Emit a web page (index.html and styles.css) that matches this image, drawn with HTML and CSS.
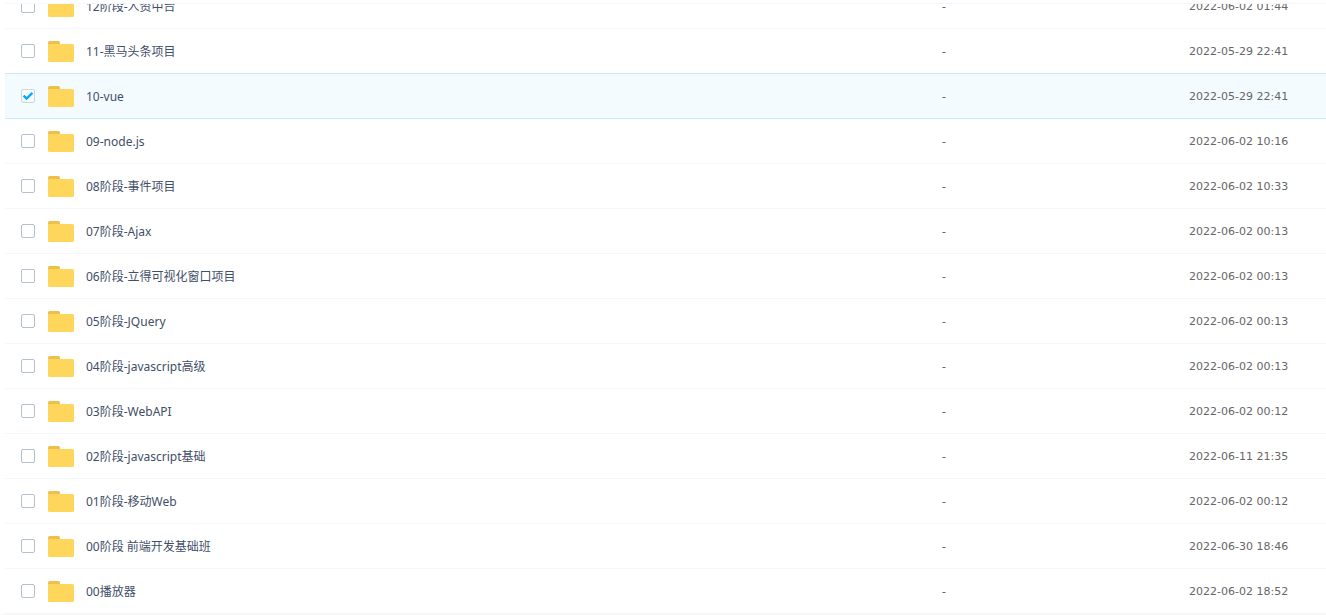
FILE: index.html
```html
<!DOCTYPE html>
<html lang="zh-CN">
<head>
    <meta charset="UTF-8">
    <meta name="viewport" content="width=device-width, initial-scale=1.0">
    <title>全部文件</title>
    <link rel="stylesheet" href="styles.css">
</head>
<body>
    <!-- Folder icon shared by all rows -->
    <svg class="sprite" aria-hidden="true">
        <symbol id="folder" viewBox="0 0 26 21">
            <path fill="#edc04b" d="M0 5V1.5Q0 0 1.5 0H10.5Q12 0 12 1.5V5Z"/>
            <path fill="#ffd65c" d="M0 3H24.5Q26 3 26 4.5V19.5Q26 21 24.5 21H1.5Q0 21 0 19.5Z"/>
        </symbol>
    </svg>

    <main class="file-list">
        <table class="file-table">
            <colgroup>
                <col class="col-check">
                <col class="col-name">
                <col class="col-size">
                <col class="col-date">
            </colgroup>
            <tbody>
                <tr>
                    <td><input type="checkbox" class="check" aria-labelledby="f12"></td>
                    <td><div class="name"><svg class="folder"><use href="#folder"/></svg><a href="#" id="f12">12阶段-人资中台</a></div></td>
                    <td class="size">-</td>
                    <td class="date">2022-06-02 01:44</td>
                </tr>
                <tr class="before-selected">
                    <td><input type="checkbox" class="check" aria-labelledby="f11"></td>
                    <td><div class="name"><svg class="folder"><use href="#folder"/></svg><a href="#" id="f11">11-黑马头条项目</a></div></td>
                    <td class="size">-</td>
                    <td class="date">2022-05-29 22:41</td>
                </tr>
                <tr class="selected">
                    <td><input type="checkbox" class="check" aria-labelledby="f10" checked></td>
                    <td><div class="name"><svg class="folder"><use href="#folder"/></svg><a href="#" id="f10">10-vue</a></div></td>
                    <td class="size">-</td>
                    <td class="date">2022-05-29 22:41</td>
                </tr>
                <tr>
                    <td><input type="checkbox" class="check" aria-labelledby="f09"></td>
                    <td><div class="name"><svg class="folder"><use href="#folder"/></svg><a href="#" id="f09">09-node.js</a></div></td>
                    <td class="size">-</td>
                    <td class="date">2022-06-02 10:16</td>
                </tr>
                <tr>
                    <td><input type="checkbox" class="check" aria-labelledby="f08"></td>
                    <td><div class="name"><svg class="folder"><use href="#folder"/></svg><a href="#" id="f08">08阶段-事件项目</a></div></td>
                    <td class="size">-</td>
                    <td class="date">2022-06-02 10:33</td>
                </tr>
                <tr>
                    <td><input type="checkbox" class="check" aria-labelledby="f07"></td>
                    <td><div class="name"><svg class="folder"><use href="#folder"/></svg><a href="#" id="f07">07阶段-Ajax</a></div></td>
                    <td class="size">-</td>
                    <td class="date">2022-06-02 00:13</td>
                </tr>
                <tr>
                    <td><input type="checkbox" class="check" aria-labelledby="f06"></td>
                    <td><div class="name"><svg class="folder"><use href="#folder"/></svg><a href="#" id="f06">06阶段-立得可视化窗口项目</a></div></td>
                    <td class="size">-</td>
                    <td class="date">2022-06-02 00:13</td>
                </tr>
                <tr>
                    <td><input type="checkbox" class="check" aria-labelledby="f05"></td>
                    <td><div class="name"><svg class="folder"><use href="#folder"/></svg><a href="#" id="f05">05阶段-JQuery</a></div></td>
                    <td class="size">-</td>
                    <td class="date">2022-06-02 00:13</td>
                </tr>
                <tr>
                    <td><input type="checkbox" class="check" aria-labelledby="f04"></td>
                    <td><div class="name"><svg class="folder"><use href="#folder"/></svg><a href="#" id="f04">04阶段-javascript高级</a></div></td>
                    <td class="size">-</td>
                    <td class="date">2022-06-02 00:13</td>
                </tr>
                <tr>
                    <td><input type="checkbox" class="check" aria-labelledby="f03"></td>
                    <td><div class="name"><svg class="folder"><use href="#folder"/></svg><a href="#" id="f03">03阶段-WebAPI</a></div></td>
                    <td class="size">-</td>
                    <td class="date">2022-06-02 00:12</td>
                </tr>
                <tr>
                    <td><input type="checkbox" class="check" aria-labelledby="f02"></td>
                    <td><div class="name"><svg class="folder"><use href="#folder"/></svg><a href="#" id="f02">02阶段-javascript基础</a></div></td>
                    <td class="size">-</td>
                    <td class="date">2022-06-11 21:35</td>
                </tr>
                <tr>
                    <td><input type="checkbox" class="check" aria-labelledby="f01"></td>
                    <td><div class="name"><svg class="folder"><use href="#folder"/></svg><a href="#" id="f01">01阶段-移动Web</a></div></td>
                    <td class="size">-</td>
                    <td class="date">2022-06-02 00:12</td>
                </tr>
                <tr>
                    <td><input type="checkbox" class="check" aria-labelledby="f00"></td>
                    <td><div class="name"><svg class="folder"><use href="#folder"/></svg><a href="#" id="f00">00阶段 前端开发基础班</a></div></td>
                    <td class="size">-</td>
                    <td class="date">2022-06-30 18:46</td>
                </tr>
                <tr>
                    <td><input type="checkbox" class="check" aria-labelledby="player"></td>
                    <td><div class="name"><svg class="folder"><use href="#folder"/></svg><a href="#" id="player">00播放器</a></div></td>
                    <td class="size">-</td>
                    <td class="date">2022-06-02 18:52</td>
                </tr>
            </tbody>
        </table>
    </main>
</body>
</html>
```
FILE: styles.css
```css
* {
    box-sizing: border-box;
}

body {
    margin: 0;
    height: 100vh;
    display: flex;
    flex-direction: column;
    padding-top: 3px;
    background: #fff;
    border-bottom: 1px solid #f7f7f7;
    font-family: "Noto Sans", "Noto Sans CJK SC", sans-serif;
    font-size: 12px;
    line-height: 18px;
    color: #666;
}

.sprite {
    display: none;
}

/* List is scrolled to its end, so the first row is cut off at the top */
.file-list {
    flex: 1;
    min-height: 0;
    display: flex;
    flex-direction: column;
    justify-content: flex-end;
    overflow: hidden;
    margin-left: 5px;
    border-top: 1px solid #f2f6fd;
}

.file-table {
    width: 100%;
    flex-shrink: 0;
    table-layout: fixed;
    border-collapse: separate;
    border-spacing: 0;
}

.col-check {
    width: 43px;
}

.col-size {
    width: 247px;
}

.col-date {
    width: 137px;
}

.file-table td {
    height: 45px;
    padding: 0;
    vertical-align: middle;
    border-bottom: 1px solid #f2f6fd;
}

.file-table tr:last-child td {
    border-bottom-color: #f7f7f7;
}

.file-table .selected td {
    background: #f4fbff;
    border-bottom-color: #cbecff;
}

.file-table .before-selected td {
    border-bottom-color: #cfe9fc;
}

.file-table .size,
.file-table .date {
    padding-top: 2px;
}

.file-table .date {
    font-family: "DejaVu Sans", sans-serif;
    font-size: 11px;
}

.name {
    display: flex;
    align-items: center;
    gap: 12px;
}

.name a {
    padding-top: 2px;
    color: #424e67;
    text-decoration: none;
}

.folder {
    width: 26px;
    height: 21px;
}

.check {
    appearance: none;
    display: block;
    width: 14px;
    height: 14px;
    margin: 0 0 0 16px;
    border: 1px solid #b4c0d0;
    border-radius: 2px;
    background: #fff;
}

.check:checked {
    border-color: #ccd7e2;
    background: #f9fdff url("data:image/svg+xml,%3Csvg xmlns='http://www.w3.org/2000/svg' viewBox='0 0 12 12'%3E%3Cpath d='M1.6 5.6L4.6 8.5L10.4 2.8' fill='none' stroke='%2306a7ff' stroke-width='2.4'/%3E%3C/svg%3E") center / 12px 12px no-repeat;
}
```
